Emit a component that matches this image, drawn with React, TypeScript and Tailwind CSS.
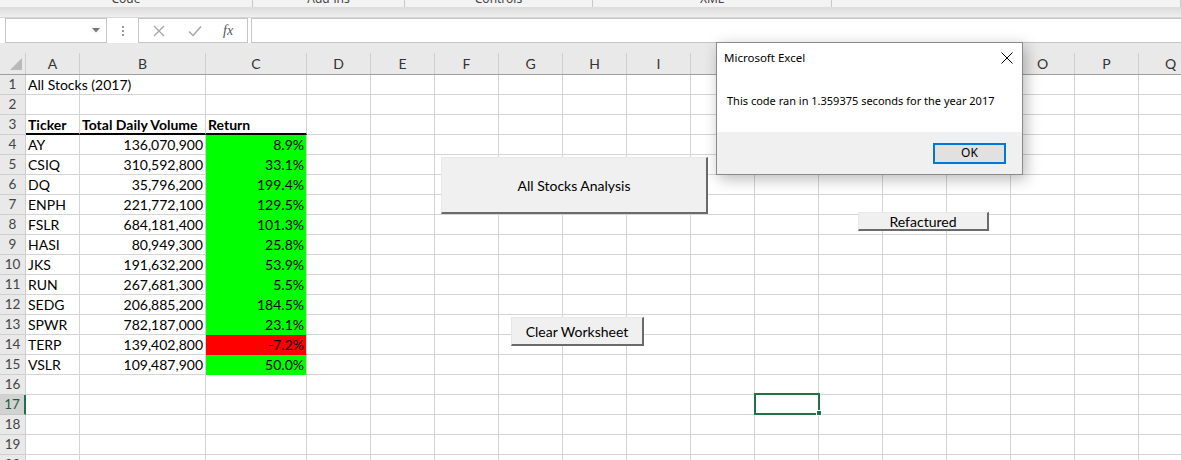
import React from "react";

const GRID = "#d4d4d4";
const GREEN = "#00ff00";
const RED = "#ff0000";

interface Col {
  label: string;
  w: number;
}

const cols: Col[] = [
  { label: "A", w: 54 },
  { label: "B", w: 126 },
  { label: "C", w: 101 },
  ...["D", "E", "F", "G", "H", "I", "J", "K", "L", "M", "N", "O", "P", "Q"].map((l) => ({ label: l, w: 64 })),
];

const stocks: [string, string, string][] = [
  ["AY", "136,070,900", "8.9%"],
  ["CSIQ", "310,592,800", "33.1%"],
  ["DQ", "35,796,200", "199.4%"],
  ["ENPH", "221,772,100", "129.5%"],
  ["FSLR", "684,181,400", "101.3%"],
  ["HASI", "80,949,300", "25.8%"],
  ["JKS", "191,632,200", "53.9%"],
  ["RUN", "267,681,300", "5.5%"],
  ["SEDG", "206,885,200", "184.5%"],
  ["SPWR", "782,187,000", "23.1%"],
  ["TERP", "139,402,800", "-7.2%"],
  ["VSLR", "109,487,900", "50.0%"],
];

const ribbonGroups = [
  { label: "Code", w: 253 },
  { label: "Add-ins", w: 152 },
  { label: "Controls", w: 188 },
  { label: "XML", w: 239 },
  { label: "", w: 349 },
];

function Cell({ row, col }: { row: number; col: number }) {
  let text: React.ReactNode = null;
  let align = "text-left pl-[2px]";
  let bold = false;
  let fill: string | null = null;
  let thick = false;

  if (row === 1 && col === 0) text = "All Stocks (2017)";
  if (row === 3) {
    bold = true;
    if (col <= 2) thick = true;
    text = ["Ticker", "Total Daily Volume", "Return"][col] ?? null;
  }
  if (row >= 4 && row <= 15) {
    const s = stocks[row - 4];
    if (col === 0) text = s[0];
    if (col === 1) {
      text = s[1];
      align = "text-right pr-[2px] justify-end";
    }
    if (col === 2) {
      text = s[2];
      align = "text-right pr-[2px] justify-end";
      fill = s[2].startsWith("-") ? RED : GREEN;
    }
  }

  const borderBottom = thick ? "#000000" : fill ?? GRID;
  return (
    <div
      className={`flex h-full shrink-0 items-center whitespace-nowrap ${align} ${bold ? "font-bold" : ""}`}
      style={{
        width: cols[col].w,
        background: fill ?? undefined,
        borderRight: `1px solid ${GRID}`,
        borderBottom: `${thick ? 2 : 1}px solid ${borderBottom}`,
      }}
    >
      {text}
    </div>
  );
}

export default function App() {
  const rows = Array.from({ length: 20 }, (_, i) => i + 1);

  return (
    <div className="relative h-[460px] w-[1181px] overflow-hidden bg-white" style={{ fontFamily: "Lato, 'Open Sans', sans-serif" }}>
      {/* ribbon bottom edge */}
      <div className="flex h-[7px] overflow-hidden bg-[#f3f3f3] text-[12px] text-[#444]" style={{ fontFamily: "'Noto Sans', sans-serif" }}>
        {ribbonGroups.map((g, i) => (
          <div key={i} className="relative shrink-0 border-r border-[#c8c8c8] text-center leading-[16px]" style={{ width: g.w }}>
            <div className="-mt-[9px]">{g.label}</div>
          </div>
        ))}
      </div>
      <div className="h-[11px] bg-gradient-to-b from-[#dcdcdc] to-[#efefef] border-b border-[#d6d6d6]" />

      {/* formula bar */}
      <div className="flex h-[25px] items-stretch bg-white">
        <div className="ml-[5px] flex w-[102px] items-center justify-end border border-[#c6c6c6] pr-[6px]">
          <svg width="8" height="5" viewBox="0 0 8 5">
            <path d="M0 0 H8 L4 4.5 Z" fill="#777" />
          </svg>
        </div>
        <div className="flex w-[31px] flex-col items-center justify-center gap-[2px]">
          <span className="h-[2px] w-[2px] bg-[#9a9a9a]" />
          <span className="h-[2px] w-[2px] bg-[#9a9a9a]" />
          <span className="h-[2px] w-[2px] bg-[#9a9a9a]" />
        </div>
        <div className="flex w-[110px] items-center border border-[#c6c6c6]">
          <svg className="ml-[14px]" width="12" height="12" viewBox="0 0 12 12">
            <path d="M1 1 L11 11 M11 1 L1 11" stroke="#a6a6a6" strokeWidth="1.3" fill="none" />
          </svg>
          <svg className="ml-[23px]" width="14" height="12" viewBox="0 0 14 12">
            <path d="M1 6.5 L5 10.5 L13 1.5" stroke="#a6a6a6" strokeWidth="1.5" fill="none" />
          </svg>
          <span className="ml-[21px] text-[14px] italic text-[#555]" style={{ fontFamily: "'Liberation Serif', serif" }}>
            fx
          </span>
        </div>
        <div className="ml-[3px] flex-1 border border-r-0 border-[#c6c6c6]" />
      </div>

      {/* column headers */}
      <div className="flex h-[32px] border-b border-[#9f9f9f] bg-[#e9e9e9] text-[14px] text-[#333]">
        <div className="relative mt-[10px] w-[26px] shrink-0 border-r border-[#cfcfcf]">
          <svg className="absolute left-[10px] top-[5px]" width="12" height="12" viewBox="0 0 12 12">
            <path d="M12 0 V12 H0 Z" fill="#b9b9b9" />
          </svg>
        </div>
        {cols.map((c) => (
          <div
            key={c.label}
            className="mt-[10px] flex shrink-0 items-center justify-center border-r border-[#cfcfcf]"
            style={{ width: c.w }}
          >
            {c.label}
          </div>
        ))}
      </div>

      {/* rows */}
      <div className="text-[14px] text-black">
        {rows.map((r) => (
          <div key={r} className="flex h-[20px]">
            <div
              className={`flex h-full w-[26px] shrink-0 items-center justify-center border-b text-[13.5px] ${
                r === 17 ? "border-r-2 border-b-[#c6c6c6] border-r-[#217346] bg-[#d2d2d2] text-[#1e5e3a]" : "border-r border-[#cfcfcf] bg-[#e9e9e9] text-[#444]"
              }`}
            >
              {r}
            </div>
            {cols.map((_, ci) => (
              <Cell key={ci} row={r} col={ci} />
            ))}
          </div>
        ))}
      </div>

      {/* selected cell K17 */}
      <div className="absolute left-[754px] top-[393px] h-[22px] w-[66px] border-2 border-[#217346]" />
      <div className="absolute left-[816px] top-[410px] h-[6px] w-[6px] border border-white bg-[#217346]" />

      {/* form buttons */}
      <div className="absolute left-[441px] top-[157px] flex h-[57px] w-[267px] items-center justify-center border-b-2 border-r-2 border-l border-t border-b-[#6a6a6a] border-r-[#6a6a6a] border-l-[#e8e8e8] border-t-[#e8e8e8] bg-[#f0f0f0] text-[14px] text-black">
        All Stocks Analysis
      </div>
      <div className="absolute left-[511px] top-[317px] flex h-[29px] w-[133px] items-center justify-center border-b-2 border-r-2 border-l border-t border-b-[#6a6a6a] border-r-[#6a6a6a] border-l-[#e8e8e8] border-t-[#e8e8e8] bg-[#f0f0f0] text-[14px] text-black">
        Clear Worksheet
      </div>
      <div className="absolute left-[858px] top-[212px] flex h-[19px] w-[131px] items-center justify-center border-b-2 border-r-2 border-l border-t border-b-[#6a6a6a] border-r-[#6a6a6a] border-l-[#e8e8e8] border-t-[#e8e8e8] bg-[#f0f0f0] text-[14px] text-black">
        Refactured
      </div>

      {/* message box */}
      <div
        className="absolute left-[716px] top-[42px] flex h-[133px] w-[307px] flex-col border border-[#8a8a8a] bg-white shadow-[3px_4px_14px_rgba(0,0,0,0.28)]"
        style={{ fontFamily: "'Noto Sans', sans-serif" }}
      >
        <div className="flex h-[30px] items-center justify-between pl-[7px] pr-[9px] text-[11.5px] text-black">
          <span>Microsoft Excel</span>
          <svg width="12" height="12" viewBox="0 0 12 12">
            <path d="M0.5 0.5 L11.5 11.5 M11.5 0.5 L0.5 11.5" stroke="#000" strokeWidth="1" fill="none" />
          </svg>
        </div>
        <div className="flex flex-1 items-center pl-[10px] pb-[3px] text-[11px] text-black">
          This code ran in 1.359375 seconds for the year 2017
        </div>
        <div className="flex h-[42px] items-center justify-end bg-[#f0f0f0] pr-[16px]">
          <div className="flex h-[21px] w-[73px] items-center justify-center border-2 border-[#0078d7] bg-[#e1e1e1] text-[12px] text-black">
            OK
          </div>
        </div>
      </div>
    </div>
  );
}
